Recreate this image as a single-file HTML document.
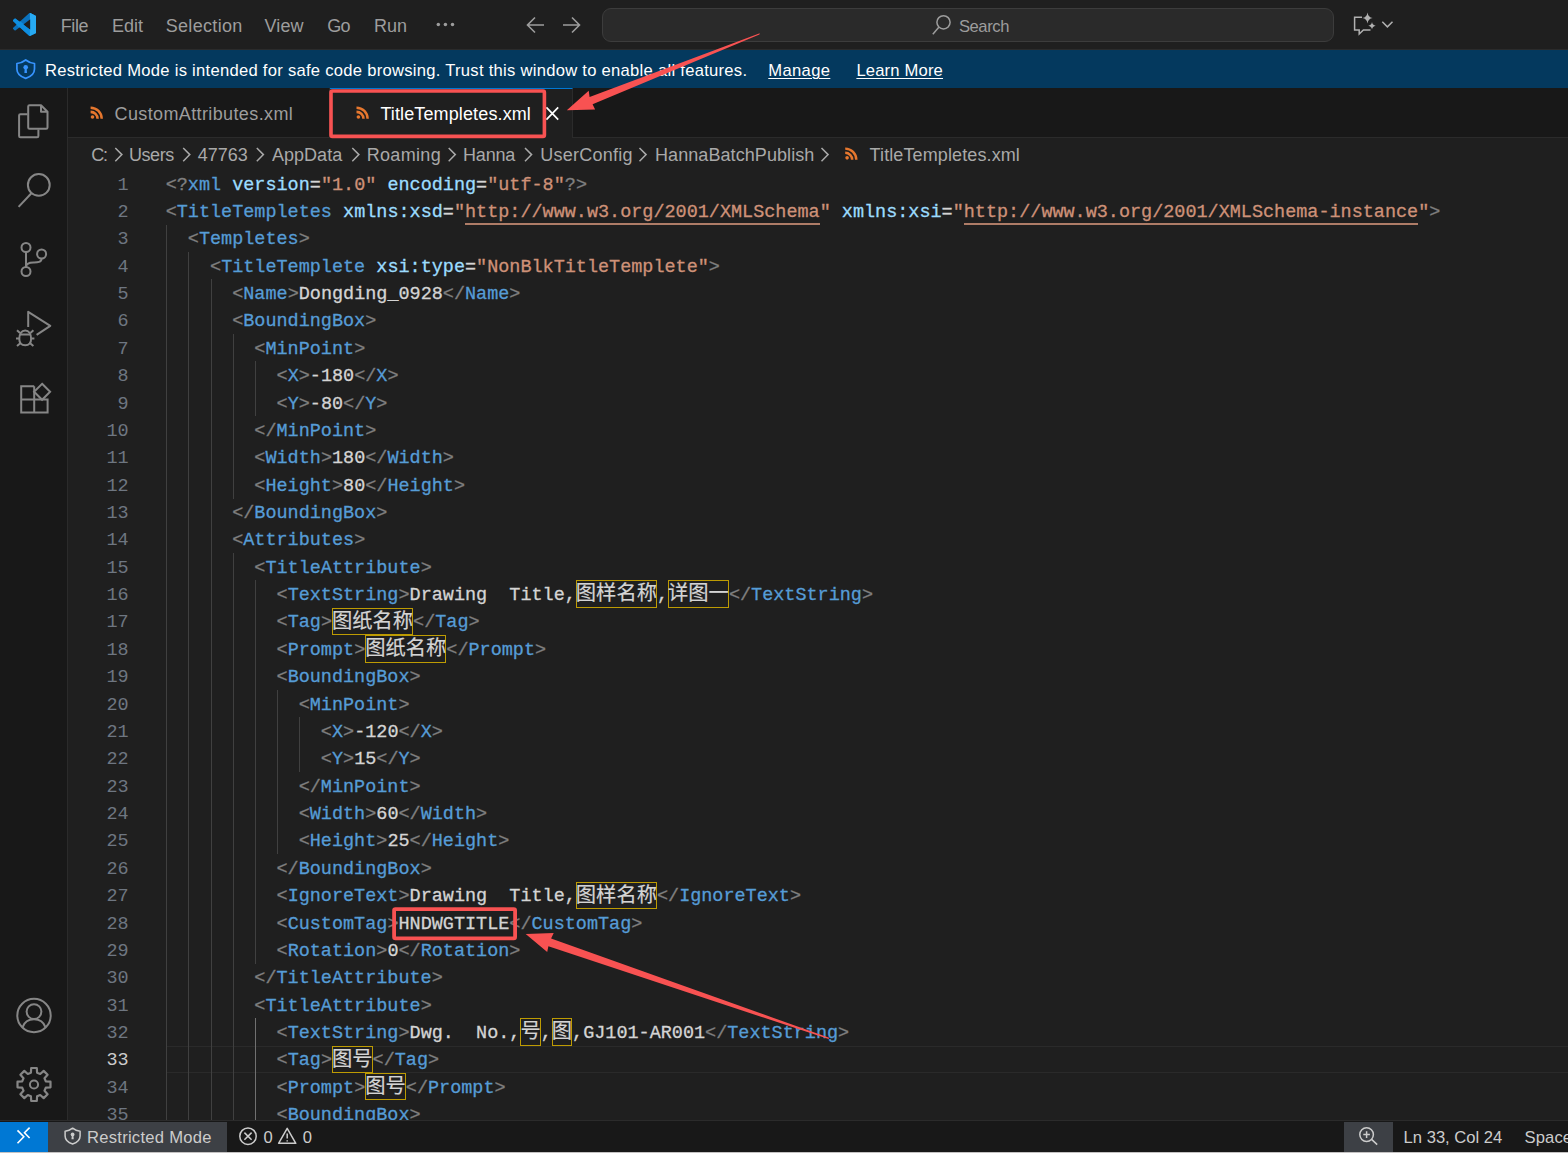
<!DOCTYPE html>
<html lang="zh">
<head>
<meta charset="utf-8">
<title>TitleTempletes.xml - Visual Studio Code</title>
<style>
*{box-sizing:border-box;margin:0;padding:0}
html,body{width:1568px;height:1153px;overflow:hidden;background:#1f1f1f}
body{position:relative;font-family:"Liberation Sans","Noto Sans CJK SC",sans-serif;color:#ccc;-webkit-font-smoothing:antialiased}
.abs{position:absolute}
.t{position:absolute;white-space:pre;line-height:1}
/* title bar */
#titlebar{position:absolute;left:0;top:0;width:1568px;height:50px;background:#1f1f1f;border-bottom:1px solid #2b2b2b}
.menu{color:#9d9d9d;font-size:18px;top:16px}
#cc{position:absolute;left:602px;top:8px;width:732px;height:34px;background:#2a2a2a;border:1px solid #3c3c3c;border-radius:9px}
/* banner */
#banner{position:absolute;left:0;top:50px;width:1568px;height:38px;background:#04395e}
.bt{color:#fff;font-size:16.6px;top:61px}
.bl{text-decoration:underline;text-underline-offset:2px;text-decoration-thickness:1.4px}
/* activity bar */
#activity{position:absolute;left:0;top:88px;width:68px;height:1033px;background:#181818;border-right:1px solid #2b2b2b}
/* tabs */
#tabs{position:absolute;left:68px;top:88px;width:1500px;height:50px;background:#181818;border-bottom:1px solid #2b2b2b}
#tab1{position:absolute;left:68px;top:88px;width:262px;height:50px;background:#181818;border-right:1px solid #2b2b2b;border-bottom:1px solid #2b2b2b}
#tab2{position:absolute;left:330px;top:88px;width:243px;height:50px;background:#1f1f1f;border-right:1px solid #2b2b2b;border-top:1.5px solid #0078d4}
.tabt{font-size:18px;top:104px}
/* breadcrumbs */
.bc{color:#a9a9a9;font-size:18px;top:145px}
/* editor */
#editor{position:absolute;left:68px;top:138px;width:1500px;height:983px;overflow:hidden}
.row{position:absolute;left:0;width:1568px;height:27.37px;font-family:"Liberation Mono","Noto Sans CJK SC",monospace;font-size:18.48px;line-height:27.37px;white-space:pre}
.row .ln{position:absolute;top:1.65px;left:60px;width:68.6px;text-align:right;color:#6e7681}
.row .ln.cur{color:#ccc}
.row .code{position:absolute;left:165.7px;top:0;-webkit-text-stroke:0.3px;color:#ccc}
.row i.g{position:absolute;top:0;width:1px;height:27.6px;background:#404040}
.row i.ga{background:#707070}
.code>span{position:relative;top:1.65px}
.p{color:#808080}.t_{color:#569cd6}.a{color:#9cdcfe}.s,.su{color:#ce9178}.x{color:#d4d4d4}
.su{border-bottom:2px solid rgba(206,145,120,0.82);padding-bottom:0.2px}
.cj{font-size:20.3px;box-shadow:inset 0 0 0 1px #bd9b03;display:inline-block;height:27.37px;line-height:30.4px;vertical-align:top;position:relative;top:-1.65px;-webkit-text-stroke:0.2px;font-family:"Liberation Mono","Noto Sans CJK SC",monospace}
#curline{position:absolute;left:167px;top:1046px;width:1401px;height:27px;border-top:1.5px solid #2a2a2a;border-bottom:1.5px solid #2a2a2a}
/* status bar */
#status{position:absolute;left:0;top:1120px;width:1568px;height:32px;background:#181818;border-top:1.5px solid #2b2b2b}
#remote{position:absolute;left:0;top:1121.5px;width:48px;height:30.5px;background:#0078d4}
#restricted{position:absolute;left:48px;top:1121.5px;width:179px;height:30.5px;background:#3d4045}
#zoombox{position:absolute;left:1344px;top:1121.5px;width:49px;height:30.5px;background:#3d4045}
#bottomstrip{position:absolute;left:0;top:1152px;width:1568px;height:1px;background:#c4c2c2}
.st{font-size:16.6px;top:1128px;color:#ccc}
svg{position:absolute;overflow:visible}
</style>
</head>
<body>
<div id="titlebar"></div>
<span class="t menu" id="m1" style="left:60.7px;top:16.9px;letter-spacing:-0.400px;">File</span>
<span class="t menu" id="m2" style="left:111.9px;top:16.9px;letter-spacing:0.070px;">Edit</span>
<span class="t menu" id="m3" style="left:165.7px;top:16.9px;letter-spacing:0.325px;">Selection</span>
<span class="t menu" id="m4" style="left:264.4px;top:16.9px;letter-spacing:0.167px;">View</span>
<span class="t menu" id="m5" style="left:327.3px;top:16.9px;letter-spacing:-0.800px;">Go</span>
<span class="t menu" id="m6" style="left:373.9px;top:16.9px;letter-spacing:0.100px;">Run</span>
<div id="cc"></div>
<span class="t menu" id="search" style="left:958.9px;top:19.0px;letter-spacing:-0.420px;font-size:16.6px">Search</span>
<div id="banner"></div>
<span class="t bt" id="b1" style="left:44.9px;top:62.9px;letter-spacing:0.273px;">Restricted Mode is intended for safe code browsing. Trust this window to enable all features.</span>
<span class="t bt bl" id="b2" style="left:768.3px;top:62.9px;letter-spacing:0.340px;">Manage</span>
<span class="t bt bl" id="b3" style="left:856.4px;top:62.9px;letter-spacing:0.178px;">Learn More</span>
<div id="activity"></div>
<div id="tabs"></div>
<div id="tab1"></div>
<div id="tab2"></div>
<span class="t tabt" id="tt1" style="left:114.6px;top:104.8px;letter-spacing:0.374px;color:#9d9d9d">CustomAttributes.xml</span>
<span class="t tabt" id="tt2" style="left:380.4px;top:104.7px;letter-spacing:0.124px;color:#fff">TitleTempletes.xml</span>
<span class="t bc" id="c1" style="left:91.3px;top:146.1px;letter-spacing:-1.300px;">C:</span>
<span class="t bc" id="c2" style="left:128.9px;top:146.1px;letter-spacing:-0.400px;">Users</span>
<span class="t bc" id="c3" style="left:197.8px;top:146.1px;letter-spacing:-0.025px;">47763</span>
<span class="t bc" id="c4" style="left:271.9px;top:146.1px;letter-spacing:0.050px;">AppData</span>
<span class="t bc" id="c5" style="left:366.7px;top:146.1px;letter-spacing:0.333px;">Roaming</span>
<span class="t bc" id="c6" style="left:463.1px;top:146.1px;letter-spacing:-0.225px;">Hanna</span>
<span class="t bc" id="c7" style="left:540.2px;top:146.1px;letter-spacing:0.244px;">UserConfig</span>
<span class="t bc" id="c8" style="left:655.0px;top:146.1px;letter-spacing:0.075px;">HannaBatchPublish</span>
<span class="t bc" id="c9" style="left:869.6px;top:146.1px;letter-spacing:0.112px;">TitleTempletes.xml</span>
<div id="curline"></div>
<div class="row" style="top:169.90px"><span class="ln">1</span><span class="code"><span class="p">&lt;?</span><span class="t_">xml</span><span class="sp"> </span><span class="a">version</span><span class="x">=</span><span class="s">"</span><span class="s">1.0</span><span class="s">"</span><span class="sp"> </span><span class="a">encoding</span><span class="x">=</span><span class="s">"</span><span class="s">utf-8</span><span class="s">"</span><span class="p">?&gt;</span></span></div>
<div class="row" style="top:197.27px"><span class="ln">2</span><span class="code"><span class="p">&lt;</span><span class="t_">TitleTempletes</span><span class="sp"> </span><span class="a">xmlns:xsd</span><span class="x">=</span><span class="s">"</span><span class="su">http:<span>//</span>www.w3.org/2001/XMLSchema</span><span class="s">"</span><span class="sp"> </span><span class="a">xmlns:xsi</span><span class="x">=</span><span class="s">"</span><span class="su">http:<span>//</span>www.w3.org/2001/XMLSchema-instance</span><span class="s">"</span><span class="p">&gt;</span></span></div>
<div class="row" style="top:224.64px"><i class="g" style="left:166.00px"></i><span class="ln">3</span><span class="code"><span class="sp">  </span><span class="p">&lt;</span><span class="t_">Templetes</span><span class="p">&gt;</span></span></div>
<div class="row" style="top:252.01px"><i class="g" style="left:166.00px"></i><i class="g" style="left:188.00px"></i><span class="ln">4</span><span class="code"><span class="sp">    </span><span class="p">&lt;</span><span class="t_">TitleTemplete</span><span class="sp"> </span><span class="a">xsi:type</span><span class="x">=</span><span class="s">"</span><span class="s">NonBlkTitleTemplete</span><span class="s">"</span><span class="p">&gt;</span></span></div>
<div class="row" style="top:279.38px"><i class="g" style="left:166.00px"></i><i class="g" style="left:188.00px"></i><i class="g" style="left:211.00px"></i><span class="ln">5</span><span class="code"><span class="sp">      </span><span class="p">&lt;</span><span class="t_">Name</span><span class="p">&gt;</span><span class="x">Dongding_0928</span><span class="p">&lt;/</span><span class="t_">Name</span><span class="p">&gt;</span></span></div>
<div class="row" style="top:306.75px"><i class="g" style="left:166.00px"></i><i class="g" style="left:188.00px"></i><i class="g" style="left:211.00px"></i><span class="ln">6</span><span class="code"><span class="sp">      </span><span class="p">&lt;</span><span class="t_">BoundingBox</span><span class="p">&gt;</span></span></div>
<div class="row" style="top:334.12px"><i class="g" style="left:166.00px"></i><i class="g" style="left:188.00px"></i><i class="g" style="left:211.00px"></i><i class="g" style="left:233.00px"></i><span class="ln">7</span><span class="code"><span class="sp">        </span><span class="p">&lt;</span><span class="t_">MinPoint</span><span class="p">&gt;</span></span></div>
<div class="row" style="top:361.49px"><i class="g" style="left:166.00px"></i><i class="g" style="left:188.00px"></i><i class="g" style="left:211.00px"></i><i class="g" style="left:233.00px"></i><i class="g" style="left:255.00px"></i><span class="ln">8</span><span class="code"><span class="sp">          </span><span class="p">&lt;</span><span class="t_">X</span><span class="p">&gt;</span><span class="x">-180</span><span class="p">&lt;/</span><span class="t_">X</span><span class="p">&gt;</span></span></div>
<div class="row" style="top:388.86px"><i class="g" style="left:166.00px"></i><i class="g" style="left:188.00px"></i><i class="g" style="left:211.00px"></i><i class="g" style="left:233.00px"></i><i class="g" style="left:255.00px"></i><span class="ln">9</span><span class="code"><span class="sp">          </span><span class="p">&lt;</span><span class="t_">Y</span><span class="p">&gt;</span><span class="x">-80</span><span class="p">&lt;/</span><span class="t_">Y</span><span class="p">&gt;</span></span></div>
<div class="row" style="top:416.23px"><i class="g" style="left:166.00px"></i><i class="g" style="left:188.00px"></i><i class="g" style="left:211.00px"></i><i class="g" style="left:233.00px"></i><span class="ln">10</span><span class="code"><span class="sp">        </span><span class="p">&lt;/</span><span class="t_">MinPoint</span><span class="p">&gt;</span></span></div>
<div class="row" style="top:443.60px"><i class="g" style="left:166.00px"></i><i class="g" style="left:188.00px"></i><i class="g" style="left:211.00px"></i><i class="g" style="left:233.00px"></i><span class="ln">11</span><span class="code"><span class="sp">        </span><span class="p">&lt;</span><span class="t_">Width</span><span class="p">&gt;</span><span class="x">180</span><span class="p">&lt;/</span><span class="t_">Width</span><span class="p">&gt;</span></span></div>
<div class="row" style="top:470.97px"><i class="g" style="left:166.00px"></i><i class="g" style="left:188.00px"></i><i class="g" style="left:211.00px"></i><i class="g" style="left:233.00px"></i><span class="ln">12</span><span class="code"><span class="sp">        </span><span class="p">&lt;</span><span class="t_">Height</span><span class="p">&gt;</span><span class="x">80</span><span class="p">&lt;/</span><span class="t_">Height</span><span class="p">&gt;</span></span></div>
<div class="row" style="top:498.34px"><i class="g" style="left:166.00px"></i><i class="g" style="left:188.00px"></i><i class="g" style="left:211.00px"></i><span class="ln">13</span><span class="code"><span class="sp">      </span><span class="p">&lt;/</span><span class="t_">BoundingBox</span><span class="p">&gt;</span></span></div>
<div class="row" style="top:525.71px"><i class="g" style="left:166.00px"></i><i class="g" style="left:188.00px"></i><i class="g" style="left:211.00px"></i><span class="ln">14</span><span class="code"><span class="sp">      </span><span class="p">&lt;</span><span class="t_">Attributes</span><span class="p">&gt;</span></span></div>
<div class="row" style="top:553.08px"><i class="g" style="left:166.00px"></i><i class="g" style="left:188.00px"></i><i class="g" style="left:211.00px"></i><i class="g" style="left:233.00px"></i><span class="ln">15</span><span class="code"><span class="sp">        </span><span class="p">&lt;</span><span class="t_">TitleAttribute</span><span class="p">&gt;</span></span></div>
<div class="row" style="top:580.45px"><i class="g" style="left:166.00px"></i><i class="g" style="left:188.00px"></i><i class="g" style="left:211.00px"></i><i class="g" style="left:233.00px"></i><i class="g" style="left:255.00px"></i><span class="ln">16</span><span class="code"><span class="sp">          </span><span class="p">&lt;</span><span class="t_">TextString</span><span class="p">&gt;</span><span class="x">Drawing  Title,<span class="cj">图样名称</span>,<span class="cj">详图一</span></span><span class="p">&lt;/</span><span class="t_">TextString</span><span class="p">&gt;</span></span></div>
<div class="row" style="top:607.82px"><i class="g" style="left:166.00px"></i><i class="g" style="left:188.00px"></i><i class="g" style="left:211.00px"></i><i class="g" style="left:233.00px"></i><i class="g" style="left:255.00px"></i><span class="ln">17</span><span class="code"><span class="sp">          </span><span class="p">&lt;</span><span class="t_">Tag</span><span class="p">&gt;</span><span class="x"><span class="cj">图纸名称</span></span><span class="p">&lt;/</span><span class="t_">Tag</span><span class="p">&gt;</span></span></div>
<div class="row" style="top:635.19px"><i class="g" style="left:166.00px"></i><i class="g" style="left:188.00px"></i><i class="g" style="left:211.00px"></i><i class="g" style="left:233.00px"></i><i class="g" style="left:255.00px"></i><span class="ln">18</span><span class="code"><span class="sp">          </span><span class="p">&lt;</span><span class="t_">Prompt</span><span class="p">&gt;</span><span class="x"><span class="cj">图纸名称</span></span><span class="p">&lt;/</span><span class="t_">Prompt</span><span class="p">&gt;</span></span></div>
<div class="row" style="top:662.56px"><i class="g" style="left:166.00px"></i><i class="g" style="left:188.00px"></i><i class="g" style="left:211.00px"></i><i class="g" style="left:233.00px"></i><i class="g" style="left:255.00px"></i><span class="ln">19</span><span class="code"><span class="sp">          </span><span class="p">&lt;</span><span class="t_">BoundingBox</span><span class="p">&gt;</span></span></div>
<div class="row" style="top:689.93px"><i class="g" style="left:166.00px"></i><i class="g" style="left:188.00px"></i><i class="g" style="left:211.00px"></i><i class="g" style="left:233.00px"></i><i class="g" style="left:255.00px"></i><i class="g" style="left:277.00px"></i><span class="ln">20</span><span class="code"><span class="sp">            </span><span class="p">&lt;</span><span class="t_">MinPoint</span><span class="p">&gt;</span></span></div>
<div class="row" style="top:717.30px"><i class="g" style="left:166.00px"></i><i class="g" style="left:188.00px"></i><i class="g" style="left:211.00px"></i><i class="g" style="left:233.00px"></i><i class="g" style="left:255.00px"></i><i class="g" style="left:277.00px"></i><i class="g" style="left:299.00px"></i><span class="ln">21</span><span class="code"><span class="sp">              </span><span class="p">&lt;</span><span class="t_">X</span><span class="p">&gt;</span><span class="x">-120</span><span class="p">&lt;/</span><span class="t_">X</span><span class="p">&gt;</span></span></div>
<div class="row" style="top:744.67px"><i class="g" style="left:166.00px"></i><i class="g" style="left:188.00px"></i><i class="g" style="left:211.00px"></i><i class="g" style="left:233.00px"></i><i class="g" style="left:255.00px"></i><i class="g" style="left:277.00px"></i><i class="g" style="left:299.00px"></i><span class="ln">22</span><span class="code"><span class="sp">              </span><span class="p">&lt;</span><span class="t_">Y</span><span class="p">&gt;</span><span class="x">15</span><span class="p">&lt;/</span><span class="t_">Y</span><span class="p">&gt;</span></span></div>
<div class="row" style="top:772.04px"><i class="g" style="left:166.00px"></i><i class="g" style="left:188.00px"></i><i class="g" style="left:211.00px"></i><i class="g" style="left:233.00px"></i><i class="g" style="left:255.00px"></i><i class="g" style="left:277.00px"></i><span class="ln">23</span><span class="code"><span class="sp">            </span><span class="p">&lt;/</span><span class="t_">MinPoint</span><span class="p">&gt;</span></span></div>
<div class="row" style="top:799.41px"><i class="g" style="left:166.00px"></i><i class="g" style="left:188.00px"></i><i class="g" style="left:211.00px"></i><i class="g" style="left:233.00px"></i><i class="g" style="left:255.00px"></i><i class="g" style="left:277.00px"></i><span class="ln">24</span><span class="code"><span class="sp">            </span><span class="p">&lt;</span><span class="t_">Width</span><span class="p">&gt;</span><span class="x">60</span><span class="p">&lt;/</span><span class="t_">Width</span><span class="p">&gt;</span></span></div>
<div class="row" style="top:826.78px"><i class="g" style="left:166.00px"></i><i class="g" style="left:188.00px"></i><i class="g" style="left:211.00px"></i><i class="g" style="left:233.00px"></i><i class="g" style="left:255.00px"></i><i class="g" style="left:277.00px"></i><span class="ln">25</span><span class="code"><span class="sp">            </span><span class="p">&lt;</span><span class="t_">Height</span><span class="p">&gt;</span><span class="x">25</span><span class="p">&lt;/</span><span class="t_">Height</span><span class="p">&gt;</span></span></div>
<div class="row" style="top:854.15px"><i class="g" style="left:166.00px"></i><i class="g" style="left:188.00px"></i><i class="g" style="left:211.00px"></i><i class="g" style="left:233.00px"></i><i class="g" style="left:255.00px"></i><span class="ln">26</span><span class="code"><span class="sp">          </span><span class="p">&lt;/</span><span class="t_">BoundingBox</span><span class="p">&gt;</span></span></div>
<div class="row" style="top:881.52px"><i class="g" style="left:166.00px"></i><i class="g" style="left:188.00px"></i><i class="g" style="left:211.00px"></i><i class="g" style="left:233.00px"></i><i class="g" style="left:255.00px"></i><span class="ln">27</span><span class="code"><span class="sp">          </span><span class="p">&lt;</span><span class="t_">IgnoreText</span><span class="p">&gt;</span><span class="x">Drawing  Title,<span class="cj">图样名称</span></span><span class="p">&lt;/</span><span class="t_">IgnoreText</span><span class="p">&gt;</span></span></div>
<div class="row" style="top:908.89px"><i class="g" style="left:166.00px"></i><i class="g" style="left:188.00px"></i><i class="g" style="left:211.00px"></i><i class="g" style="left:233.00px"></i><i class="g" style="left:255.00px"></i><span class="ln">28</span><span class="code"><span class="sp">          </span><span class="p">&lt;</span><span class="t_">CustomTag</span><span class="p">&gt;</span><span class="x">HNDWGTITLE</span><span class="p">&lt;/</span><span class="t_">CustomTag</span><span class="p">&gt;</span></span></div>
<div class="row" style="top:936.26px"><i class="g" style="left:166.00px"></i><i class="g" style="left:188.00px"></i><i class="g" style="left:211.00px"></i><i class="g" style="left:233.00px"></i><i class="g" style="left:255.00px"></i><span class="ln">29</span><span class="code"><span class="sp">          </span><span class="p">&lt;</span><span class="t_">Rotation</span><span class="p">&gt;</span><span class="x">0</span><span class="p">&lt;/</span><span class="t_">Rotation</span><span class="p">&gt;</span></span></div>
<div class="row" style="top:963.63px"><i class="g" style="left:166.00px"></i><i class="g" style="left:188.00px"></i><i class="g" style="left:211.00px"></i><i class="g" style="left:233.00px"></i><span class="ln">30</span><span class="code"><span class="sp">        </span><span class="p">&lt;/</span><span class="t_">TitleAttribute</span><span class="p">&gt;</span></span></div>
<div class="row" style="top:991.00px"><i class="g" style="left:166.00px"></i><i class="g" style="left:188.00px"></i><i class="g" style="left:211.00px"></i><i class="g" style="left:233.00px"></i><span class="ln">31</span><span class="code"><span class="sp">        </span><span class="p">&lt;</span><span class="t_">TitleAttribute</span><span class="p">&gt;</span></span></div>
<div class="row" style="top:1018.37px"><i class="g" style="left:166.00px"></i><i class="g" style="left:188.00px"></i><i class="g" style="left:211.00px"></i><i class="g" style="left:233.00px"></i><i class="g ga" style="left:255.00px"></i><span class="ln">32</span><span class="code"><span class="sp">          </span><span class="p">&lt;</span><span class="t_">TextString</span><span class="p">&gt;</span><span class="x">Dwg.  No.,<span class="cj">号</span>,<span class="cj">图</span>,GJ101-AR001</span><span class="p">&lt;/</span><span class="t_">TextString</span><span class="p">&gt;</span></span></div>
<div class="row" style="top:1045.74px"><i class="g" style="left:166.00px"></i><i class="g" style="left:188.00px"></i><i class="g" style="left:211.00px"></i><i class="g" style="left:233.00px"></i><i class="g ga" style="left:255.00px"></i><span class="ln cur">33</span><span class="code"><span class="sp">          </span><span class="p">&lt;</span><span class="t_">Tag</span><span class="p">&gt;</span><span class="x"><span class="cj">图号</span></span><span class="p">&lt;/</span><span class="t_">Tag</span><span class="p">&gt;</span></span></div>
<div class="row" style="top:1073.11px"><i class="g" style="left:166.00px"></i><i class="g" style="left:188.00px"></i><i class="g" style="left:211.00px"></i><i class="g" style="left:233.00px"></i><i class="g ga" style="left:255.00px"></i><span class="ln">34</span><span class="code"><span class="sp">          </span><span class="p">&lt;</span><span class="t_">Prompt</span><span class="p">&gt;</span><span class="x"><span class="cj">图号</span></span><span class="p">&lt;/</span><span class="t_">Prompt</span><span class="p">&gt;</span></span></div>
<div class="row" style="top:1100.48px"><i class="g" style="left:166.00px"></i><i class="g" style="left:188.00px"></i><i class="g" style="left:211.00px"></i><i class="g" style="left:233.00px"></i><i class="g ga" style="left:255.00px"></i><span class="ln">35</span><span class="code"><span class="sp">          </span><span class="p">&lt;</span><span class="t_">BoundingBox</span><span class="p">&gt;</span></span></div>
<div id="status"></div>
<div id="remote"></div>
<div id="restricted"></div>
<div id="zoombox"></div>
<span class="t st" id="s1" style="left:87.0px;top:1129.8px;letter-spacing:0.257px;">Restricted Mode</span>
<span class="t st" id="s2" style="left:263.6px;top:1129.8px;letter-spacing:-1.000px;">0</span>
<span class="t st" id="s3" style="left:302.7px;top:1129.8px;letter-spacing:-1.200px;">0</span>
<span class="t st" id="s4" style="left:1403.6px;top:1129.8px;letter-spacing:0.000px;">Ln 33, Col 24</span>
<span class="t st" id="s5" style="left:1524.6px;top:1129.8px;letter-spacing:0.100px;">Spaces: 2</span>
<div id="bottomstrip"></div>
<svg id="icons" width="1568" height="1153" viewBox="0 0 1568 1153" style="left:0;top:0" fill="none" stroke-linecap="round" stroke-linejoin="round">
<defs>
<linearGradient id="vsg" x1="0" y1="0" x2="1" y2="0"><stop offset="0" stop-color="#0a78c8"/><stop offset="0.55" stop-color="#1590e0"/><stop offset="1" stop-color="#2bb0f5"/></linearGradient>
<g id="rss" stroke="none" fill="#e6772e"><circle cx="2" cy="11" r="1.9"/><path d="M0 4.3 A8.7 8.7 0 0 1 8.7 13 L6 13 A6 6 0 0 0 0 7 Z"/><path d="M0 0 A13 13 0 0 1 13 13 L10.4 13 A10.4 10.4 0 0 0 0 2.6 Z"/></g>
<path id="chev" d="M0 0 L6.6 6.6 L0 13.2" stroke="#a9a9a9" stroke-width="1.5" fill="none" stroke-linecap="butt" stroke-linejoin="miter"/>
</defs>
<!-- vscode logo -->
<clipPath id="vsclip"><path d="M23.15 2.587L18.21.21a1.494 1.494 0 0 0-1.705.29l-9.46 8.63-4.12-3.128a.999.999 0 0 0-1.276.057L.327 7.261A1 1 0 0 0 .326 8.74L3.899 12 .326 15.26a1 1 0 0 0 .001 1.479L1.65 17.94a.999.999 0 0 0 1.276.057l4.12-3.128 9.46 8.63a1.492 1.492 0 0 0 1.704.29l4.942-2.377A1.5 1.5 0 0 0 24 20.06V3.939a1.5 1.5 0 0 0-.85-1.352zm-5.146 14.861L10.826 12l7.178-5.448v10.896z"/></clipPath>
<g transform="translate(12.9,12.9) scale(0.965)" stroke="none" clip-path="url(#vsclip)">
<rect x="0" y="0" width="24" height="24" fill="#0b72bd"/>
<polygon points="0,5 3,5 18.2,17.2 18.2,24 16.4,24 0,9.2" fill="#0f8ee0"/>
<polygon points="17.6,0 24,0 24,24 17.6,24" fill="#27aaf3"/>
</g>
<g fill="#9d9d9d" stroke="none"><circle cx="438.3" cy="24.5" r="1.75"/><circle cx="445.4" cy="24.5" r="1.75"/><circle cx="452.5" cy="24.5" r="1.75"/></g>
<!-- nav arrows -->
<g stroke="#9d9d9d" stroke-width="1.6" stroke-linecap="butt" stroke-linejoin="miter">
<path d="M544 25 H527.5 M535 17.5 L527.5 25 L535 32.5"/>
<path d="M563 25 H579.5 M572 17.5 L579.5 25 L572 32.5"/>
</g>
<!-- search icon in command center -->
<g stroke="#9d9d9d" stroke-width="1.5"><circle cx="943.5" cy="22.3" r="6.6"/><path d="M938.8 27.2 L932.8 34.2" stroke-linecap="butt"/></g>
<!-- copilot/chat icon -->
<g stroke="#b0b0b0" stroke-width="1.5" stroke-linecap="butt" stroke-linejoin="miter">
<path d="M1362 17.2 H1354.6 V30 H1359.2 V34 L1363.4 30 H1370.5"/>
<path d="M1382.3 21.8 L1387.4 26.9 L1392.5 21.8"/>
</g>
<g fill="#b0b0b0" stroke="none">
<path d="M1367.5 12.6 Q1368.2 17.4 1372.6 18.1 Q1368.2 18.8 1367.5 23.6 Q1366.8 18.8 1362.4 18.1 Q1366.8 17.4 1367.5 12.6Z"/>
<path d="M1372 22 Q1372.5 25.2 1375.7 25.7 Q1372.5 26.2 1372 29.4 Q1371.5 26.2 1368.3 25.7 Q1371.5 25.2 1372 22Z"/>
</g>
<!-- banner shield -->
<g stroke="#3794ff" stroke-width="1.7" stroke-linejoin="round">
<path d="M25.7 60 C22.8 62.3 20 63.2 16.9 63.5 V69 C16.9 73.6 20.3 76.6 25.7 78.4 C31.1 76.6 34.5 73.6 34.5 69 V63.5 C31.4 63.2 28.6 62.3 25.7 60Z"/>
</g>
<g fill="#3794ff" stroke="none"><circle cx="25.7" cy="67.3" r="2.3"/><path d="M24.7 68 H26.7 L27 73 H24.4Z"/></g>
<!-- activity bar icons -->
<g stroke="#868686" stroke-width="2" stroke-linejoin="round" stroke-linecap="butt">
<!-- files -->
<path d="M41 105.2 H29.5 Q28.2 105.2 28.2 106.5 V127.4 Q28.2 128.7 29.5 128.7 H46.2 Q47.5 128.7 47.5 127.4 V111.7 L41 105.2 V111.7 H47.5"/>
<path d="M27.5 114.3 H20.4 Q19.1 114.3 19.1 115.6 V136 Q19.1 137.3 20.4 137.3 H37.1 Q38.4 137.3 38.4 136 V129.4"/>
<!-- search -->
<circle cx="38.8" cy="184.9" r="10.9"/>
<path d="M31.4 193.2 L18.6 206.9"/>
<!-- source control -->
<circle cx="26" cy="247.5" r="4.5"/><circle cx="26" cy="271.5" r="4.5"/><circle cx="41.6" cy="254" r="4.5"/>
<path d="M26 252 V267 M41.6 258.5 C41.6 262.6 37 262.4 33.5 262.4 C29 262.4 26 263.5 26 267"/>
<!-- debug -->
<path d="M28.2 327 V311.8 L50.3 325.8 L36.6 334.8"/>
<path d="M19.3 339 C19.3 334 21.5 330.5 25.2 330.5 C28.9 330.5 31.1 334 31.1 339 C31.1 343 28.9 345.3 25.2 345.3 C21.5 345.3 19.3 343 19.3 339Z"/>
<path d="M19.8 334.6 H30.6 M19.3 338.6 H16 M31.1 338.6 H34.4 M20 333 L17 330.3 M30.4 333 L33.4 330.3 M20.3 343.2 L17 346 M30.1 343.2 L33.4 346"/>
<!-- extensions -->
<path d="M34.2 386.2 H21.2 V412.6 H47.6 V399.6 H21.2 M34.2 386.2 V412.6" stroke-linejoin="miter"/>
<path d="M42.1 383.8 L50.1 391.8 L42.1 399.8 L34.1 391.8Z" stroke-linejoin="miter" fill="#181818"/>
<!-- account -->
<circle cx="34" cy="1015.5" r="16.7"/><circle cx="34" cy="1011.6" r="7.4"/>
<path d="M22.6 1027.2 C24.4 1022 28.6 1019.3 34 1019.3 C39.4 1019.3 43.6 1022 45.4 1027.2"/>
<!-- gear -->
<path d="M30.9 1072.7 L31.2 1068.0 L36.8 1068.0 L37.1 1072.7 L40.2 1074.0 L43.7 1070.9 L47.6 1074.8 L44.5 1078.3 L45.8 1081.4 L50.5 1081.7 L50.5 1087.3 L45.8 1087.6 L44.5 1090.7 L47.6 1094.2 L43.7 1098.1 L40.2 1095.0 L37.1 1096.3 L36.8 1101.0 L31.2 1101.0 L30.9 1096.3 L27.8 1095.0 L24.3 1098.1 L20.4 1094.2 L23.5 1090.7 L22.2 1087.6 L17.5 1087.3 L17.5 1081.7 L22.2 1081.4 L23.5 1078.3 L20.4 1074.8 L24.3 1070.9 L27.8 1074.0Z" stroke-linejoin="round" stroke-width="2.2"/>
<circle cx="34" cy="1084.5" r="4.1"/>
</g>
<!-- tab icons -->
<use href="#rss" transform="translate(90.6,106.5) scale(0.95)"/>
<use href="#rss" transform="translate(356.5,106.5) scale(0.95)"/>
<use href="#rss" transform="translate(845.2,147.4) scale(0.95)"/>
<!-- tab close -->
<path d="M546.4 107.4 L558.2 119.6 M558.2 107.4 L546.4 119.6" stroke="#fff" stroke-width="1.7" stroke-linecap="butt"/>
<!-- breadcrumb chevrons -->
<use href="#chev" x="115.3" y="148"/><use href="#chev" x="183.2" y="148"/><use href="#chev" x="256.8" y="148"/><use href="#chev" x="352.3" y="148"/><use href="#chev" x="448.7" y="148"/><use href="#chev" x="525" y="148"/><use href="#chev" x="639.5" y="148"/><use href="#chev" x="821.5" y="148"/>
<!-- status bar icons -->
<g stroke="#fff" stroke-width="1.6" stroke-linecap="butt" stroke-linejoin="miter">
<path d="M17.5 1130.4 L23.8 1136.8 L17.5 1143.2 M29.6 1127.6 L24.5 1132.8 L29.6 1138"/>
</g>
<g stroke="#ccc" stroke-width="1.5" stroke-linejoin="round">
<path d="M72.6 1128.2 C70.2 1130.2 67.8 1131 65.1 1131.2 V1136 C65.1 1140 68 1142.500 72.6 1144 C77.2 1142.5 80.1 1140 80.1 1136 V1131.2 C77.4 1131 75 1130.2 72.6 1128.2Z"/>
<circle cx="248" cy="1136.2" r="8.2"/><path d="M244.4 1132.6 L251.6 1139.8 M251.6 1132.6 L244.4 1139.8" stroke-linecap="butt"/>
<path d="M287.2 1128.3 L295.8 1143.3 H278.6Z"/><path d="M287.2 1133.5 V1138.6 M287.2 1140.2 V1141.6" stroke-linecap="butt"/>
<circle cx="1366.6" cy="1134.6" r="6.8"/><path d="M1371.6 1139.4 L1377.2 1144.6 M1363.3 1134.6 H1369.9 M1366.6 1131.3 V1137.9" stroke-linecap="butt"/>
</g>
<g fill="#ccc" stroke="none"><circle cx="72.6" cy="1134.4" r="1.9"/><path d="M71.8 1135 H73.4 L73.7 1139.2 H71.5Z"/></g>
</svg>

<svg id="annot" width="1568" height="1153" viewBox="0 0 1568 1153" style="left:0;top:0">
<rect x="331" y="91" width="213.4" height="45.4" rx="1.4" fill="none" stroke="#f85252" stroke-width="3.6"/>
<polygon fill="#f85252" points="759.8,33.2 759.4,34.4 592.6,104.2 595.1,109.5 566.8,110.3 588.7,90.7 589.6,97"/>
<rect x="394.1" y="909.1" width="121" height="29.2" rx="1.4" fill="none" stroke="#f85252" stroke-width="3.8"/>
<polygon fill="#f85252" points="829.2,1037.8 828.6,1039 548.4,946.3 547.2,952 525.7,934 553.7,933 551.1,938.6"/>
</svg>

</body>
</html>
